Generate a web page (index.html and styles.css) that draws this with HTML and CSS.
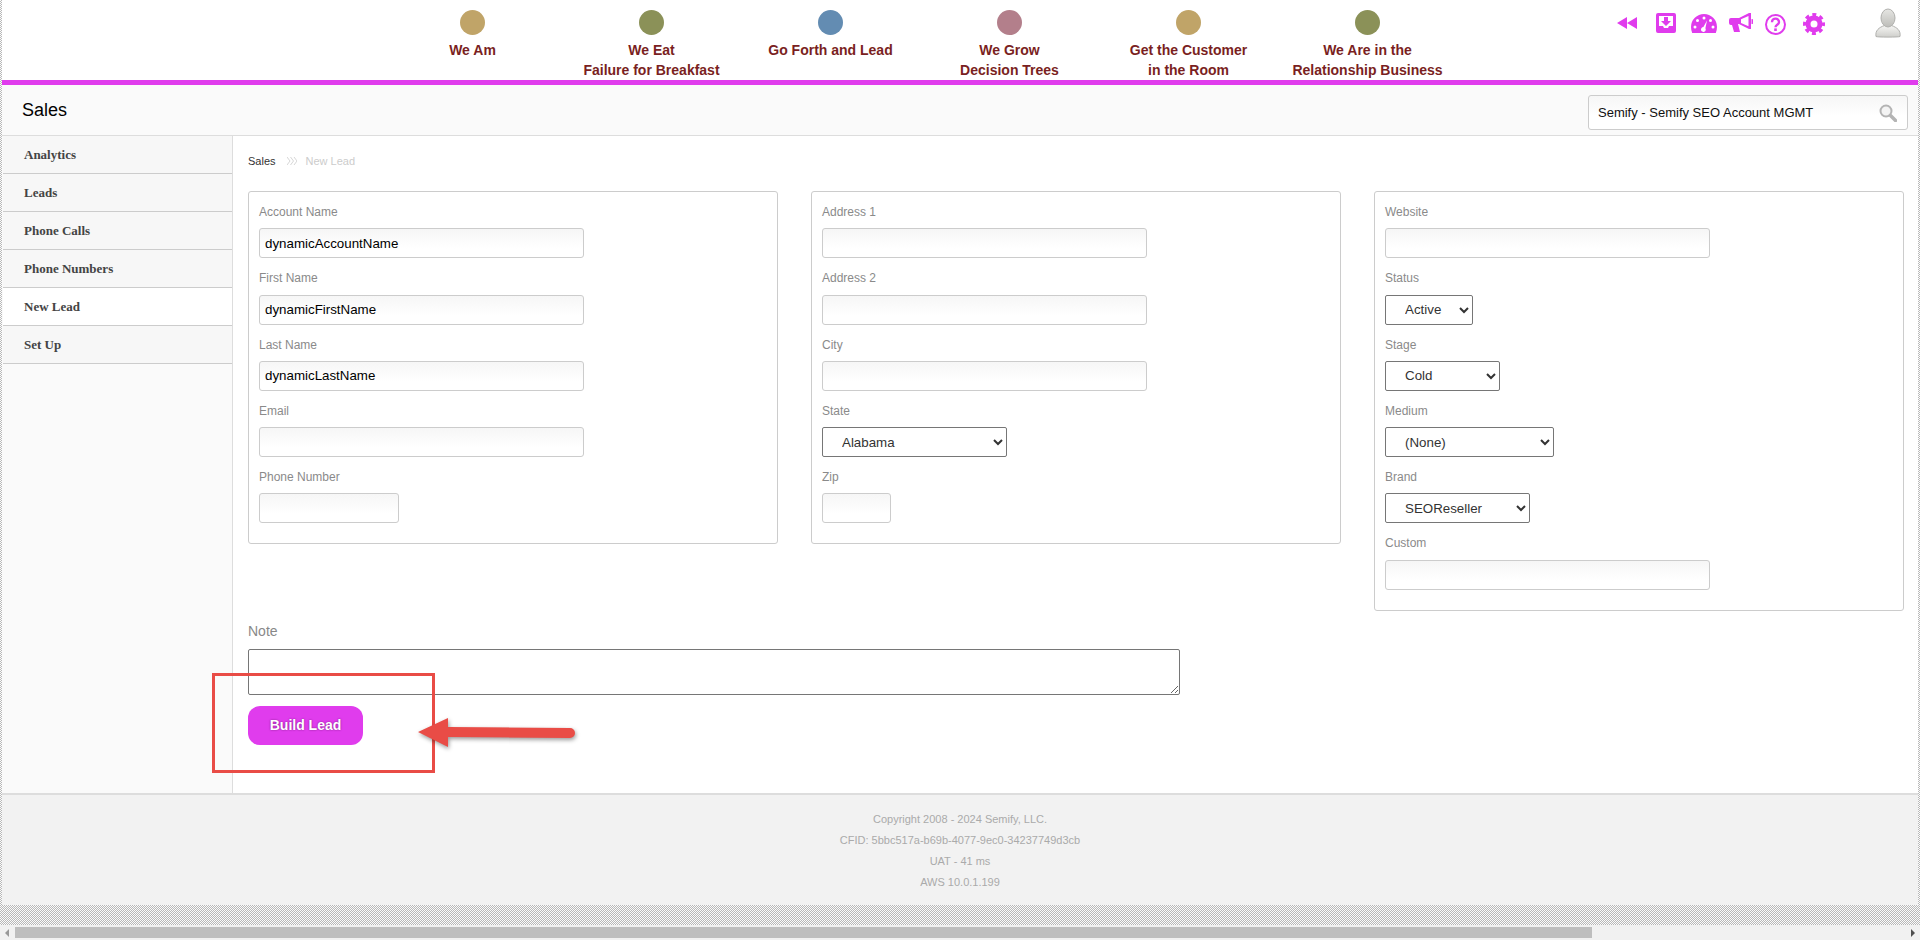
FILE: index.html
```html
<!DOCTYPE html>
<html lang="en">
<head>
  <meta charset="UTF-8">
  <title>Sales - New Lead</title>
  <link rel="stylesheet" href="styles.css">
</head>
<body>
  <div class="page">
    <header class="top">
      <nav class="top-nav">
        <a class="nav-item"><span class="dot dot-tan"></span>We Am</a>
        <a class="nav-item"><span class="dot dot-olive"></span>We Eat<br>Failure for Breakfast</a>
        <a class="nav-item"><span class="dot dot-blue"></span>Go Forth and Lead</a>
        <a class="nav-item"><span class="dot dot-rose"></span>We Grow<br>Decision Trees</a>
        <a class="nav-item"><span class="dot dot-tan"></span>Get the Customer<br>in the Room</a>
        <a class="nav-item"><span class="dot dot-olive"></span>We Are in the<br>Relationship Business</a>
      </nav>
      <div class="top-icons">
        <svg class="icon-back" viewBox="0 0 20 12"><path d="M10 0v12L0 6zM20 0v12L10 6z"/></svg>
        <svg class="icon-inbox" viewBox="0 0 20 20"><path fill-rule="evenodd" d="M2 0h16a2 2 0 0 1 2 2v16a2 2 0 0 1-2 2H2a2 2 0 0 1-2-2V2a2 2 0 0 1 2-2zM3 3v10h4l1 2h4l1-2h4V3z"/><path d="M8 4h4v4h3l-5 5-5-5h3z"/></svg>
        <svg class="icon-gauge" viewBox="0 0 26 19"><path fill-rule="evenodd" d="M13 0a13 13 0 0 1 13 13c0 2-.4 4-1.200 6H1.200C.4 17 0 15 0 13A13 13 0 0 1 13 0zM13 2.500a1.500 1.500 0 1 0 0 3 1.500 1.500 0 0 0 0-3zM6.500 5a1.500 1.500 0 1 0 0 3 1.500 1.500 0 0 0 0-3zM19.500 5a1.500 1.500 0 1 0 0 3 1.500 1.500 0 0 0 0-3zM4 11.500a1.500 1.500 0 1 0 0 3 1.500 1.500 0 0 0 0-3zM22 11.500a1.500 1.500 0 1 0 0 3 1.500 1.500 0 0 0 0-3zM16 6.500l-3.600 6.600a2.400 2.400 0 1 0 2 1.100z"/></svg>
        <svg class="icon-horn" viewBox="0 0 24 20"><path fill-rule="evenodd" d="M2 5h8L20 0h2v16h-2L10 11H9l2 8H5L3 12H2a2 2 0 0 1-2-2V7a2 2 0 0 1 2-2zM12 6.300v3.600l7.500 3.300V3z"/><path d="M22.500 6a2.500 2.500 0 0 1 0 5z"/></svg>
        <svg class="icon-help" viewBox="0 0 21 21"><circle cx="10.500" cy="10.500" r="9.500" class="ring"/><path class="hook" d="M7 8.200c0-5 7.200-4.600 7 0 0 2.600-3.500 2.600-3.500 5"/><rect x="9.200" y="14.400" width="2.600" height="2.600"/></svg>
        <svg class="icon-cog" viewBox="0 0 22 22"><circle cx="11" cy="11" r="6" class="cog-ring"/><circle cx="11" cy="11" r="9" class="cog-teeth"/></svg>
      </div>
      <svg class="avatar" viewBox="0 0 26 30">
        <defs>
          <linearGradient id="avHead" x1="0" y1="0" x2="0" y2="1"><stop offset="0" stop-color="#e6e6e3"/><stop offset="1" stop-color="#bdbdb9"/></linearGradient>
          <linearGradient id="avBody" x1="0" y1="0" x2="0" y2="1"><stop offset="0" stop-color="#f6f6f4"/><stop offset="1" stop-color="#cfcfcb"/></linearGradient>
        </defs>
        <path d="M1 28.500c-1-6 3-9 8.500-11h7c5.500 2 9.500 5 8.500 11-1 .8-23 .8-24 0z" fill="url(#avBody)" stroke="#b0b0ad"/>
        <ellipse cx="13" cy="10" rx="7" ry="9" fill="url(#avHead)" stroke="#b0b0ad"/>
      </svg>
    </header>

    <div class="title-bar">
      <h1 class="title">Sales</h1>
      <div class="account-search">
        <span>Semify - Semify SEO Account MGMT</span>
        <svg viewBox="0 0 18 18"><circle cx="7" cy="7" r="5.500" class="lens"/><path class="handle" d="M11.500 11.500l5 5"/></svg>
      </div>
    </div>

    <div class="body-row">
      <ul class="side-nav">
        <li>Analytics</li>
        <li>Leads</li>
        <li>Phone Calls</li>
        <li>Phone Numbers</li>
        <li class="active">New Lead</li>
        <li>Set Up</li>
      </ul>

      <main class="content">
        <div class="crumbs">
          <span>Sales</span>
          <svg class="crumb-sep" viewBox="0 0 10 8"><path d="M0 0l3 4-3 4M3.500 0l3 4-3 4M7 0l3 4-3 4"/></svg>
          <span class="crumb-now">New Lead</span>
        </div>

        <div class="panels">
          <div class="panel">
            <label class="field-label">Account Name</label>
            <input class="text-input wide" type="text" value="dynamicAccountName">
            <label class="field-label">First Name</label>
            <input class="text-input wide" type="text" value="dynamicFirstName">
            <label class="field-label">Last Name</label>
            <input class="text-input wide" type="text" value="dynamicLastName">
            <label class="field-label">Email</label>
            <input class="text-input wide" type="text">
            <label class="field-label">Phone Number</label>
            <input class="text-input phone" type="text">
          </div>
          <div class="panel">
            <label class="field-label">Address 1</label>
            <input class="text-input wide" type="text">
            <label class="field-label">Address 2</label>
            <input class="text-input wide" type="text">
            <label class="field-label">City</label>
            <input class="text-input wide" type="text">
            <label class="field-label">State</label>
            <select class="pick pick-state"><option>Alabama</option></select>
            <label class="field-label">Zip</label>
            <input class="text-input zip" type="text">
          </div>
          <div class="panel">
            <label class="field-label">Website</label>
            <input class="text-input wide" type="text">
            <label class="field-label">Status</label>
            <select class="pick pick-status"><option>Active</option></select>
            <label class="field-label">Stage</label>
            <select class="pick pick-stage"><option>Cold</option></select>
            <label class="field-label">Medium</label>
            <select class="pick pick-medium"><option>(None)</option></select>
            <label class="field-label">Brand</label>
            <select class="pick pick-brand"><option>SEOReseller</option></select>
            <label class="field-label">Custom</label>
            <input class="text-input wide" type="text">
          </div>
        </div>

        <label class="note-label">Note</label>
        <textarea class="note"></textarea>
        <button class="build-btn" type="button">Build Lead</button>
      </main>
    </div>

    <footer class="foot">
      <p>Copyright 2008 - 2024 Semify, LLC.</p>
      <p>CFID: 5bbc517a-b69b-4077-9ec0-34237749d3cb</p>
      <p>UAT - 41 ms</p>
      <p>AWS 10.0.1.199</p>
    </footer>

    <!-- annotation drawn on top of the screenshot -->
    <div class="mark-box"></div>
    <svg class="mark-arrow" viewBox="0 0 160 32"><path d="M0 15L30 1v9l122 1a4.500 4.500 0 0 1 0 10l-122-1v10z"/></svg>
  </div>

  <div class="h-scroll">
    <span class="arrow-left"></span>
    <div class="h-thumb"></div>
    <span class="arrow-right"></span>
  </div>
</body>
</html>
```

FILE: styles.css
```css
html, body {
  margin: 0;
  padding: 0;
}

body {
  width: 1920px;
  height: 940px;
  overflow: hidden;
  font-family: "Liberation Sans", Arial, sans-serif;
  background: repeating-conic-gradient(#b8b8b8 0 25%, #fbfbfb 0 50%) 0 0 / 2px 2px;
}

.page {
  position: relative;
  margin: 0 2px;
  height: 905px;
  background-color: #fff;
}

/* top header */
.top {
  display: flex;
  height: 80px;
  box-sizing: content-box;
  border-bottom: 5px solid #e03ced;
  background-color: #fff;
}

.top-nav {
  display: flex;
  margin-left: 381px;
}

.nav-item {
  display: block;
  width: 179px;
  padding-top: 10px;
  text-align: center;
  font-size: 14px;
  font-weight: bold;
  line-height: 20px;
  color: #7a1f22;
}

.dot {
  display: block;
  width: 25px;
  height: 25px;
  margin: 0 auto 5px;
  border-radius: 50%;
}

.dot-tan { background-color: #c0a468; }
.dot-olive { background-color: #8b9158; }
.dot-blue { background-color: #638cb2; }
.dot-rose { background-color: #b37f8b; }

.top-icons {
  display: flex;
  align-items: flex-start;
  margin-left: 0;
  padding-left: 160px;
  fill: #e03ced;
}

.icon-back { width: 20px; height: 12px; margin-top: 17px; }
.icon-inbox { width: 20px; height: 20px; margin: 13px 0 0 19px; }
.icon-gauge { width: 26px; height: 19px; margin: 14px 0 0 15px; }
.icon-horn { width: 24px; height: 20px; margin: 13px 0 0 12px; }
.icon-help { width: 21px; height: 21px; margin: 14px 0 0 12px; }
.icon-cog { width: 22px; height: 22px; margin: 13px 0 0 17px; }

.ring {
  fill: none;
  stroke: #e03ced;
  stroke-width: 2;
}

.hook {
  fill: none;
  stroke: #e03ced;
  stroke-width: 2.400;
}

.cog-ring {
  fill: none;
  stroke: #e03ced;
  stroke-width: 5;
}

.cog-teeth {
  fill: none;
  stroke: #e03ced;
  stroke-width: 4;
  stroke-dasharray: 3.800 3.270;
  stroke-dashoffset: 1.900;
}

.avatar {
  width: 26px;
  height: 30px;
  margin: 8px 0 0 50px;
}

/* title row */
.title-bar {
  display: flex;
  justify-content: space-between;
  height: 50px;
  padding: 0 10px 0 20px;
  background-color: #fafafa;
  border-bottom: 1px solid #ddd;
}

.title {
  margin: 0;
  font-size: 18px;
  font-weight: normal;
  line-height: 51px;
  color: #000;
}

.account-search {
  display: flex;
  justify-content: space-between;
  align-items: center;
  box-sizing: border-box;
  width: 320px;
  height: 35px;
  margin-top: 10px;
  padding: 0 10px 0 9px;
  border: 1px solid #ccc;
  border-radius: 3px;
  background: linear-gradient(#f6f6f6, #fff 60%);
  font-size: 13px;
  color: #111;
}

.account-search svg {
  width: 18px;
  height: 18px;
}

.lens {
  fill: #f4f4f4;
  stroke: #b4b4b4;
  stroke-width: 2;
}

.handle {
  stroke: #b4b4b4;
  stroke-width: 3.500;
  stroke-linecap: round;
}

/* sidebar + content */
.body-row {
  display: flex;
  height: 657px;
}

.side-nav {
  box-sizing: border-box;
  width: 231px;
  margin: 0;
  padding: 0 0 0 1px;
  list-style: none;
  background-color: #fafafa;
  border-right: 1px solid #ddd;
}

.side-nav li {
  box-sizing: border-box;
  height: 38px;
  padding-left: 21px;
  background-color: #f7f7f7;
  border-bottom: 1px solid #ccc;
  font-family: "Liberation Serif", "Times New Roman", serif;
  font-size: 13px;
  font-weight: bold;
  line-height: 37px;
  color: #444;
}

.side-nav li.active {
  background-color: #fff;
}

.content {
  flex: 1;
  padding: 18px 0 0 15px;
  background-color: #fff;
}

.crumbs {
  display: flex;
  align-items: center;
  height: 14px;
  margin-bottom: 23px;
  font-size: 11px;
  line-height: 14px;
  color: #333;
}

.crumb-sep {
  width: 10px;
  height: 8px;
  margin: 0 9px 0 11px;
  fill: none;
  stroke: #ccc;
  stroke-width: 0.800;
}

.crumb-now {
  color: #ccc;
}

.panels {
  display: flex;
  align-items: flex-start;
  gap: 33px;
}

.panel {
  display: flex;
  flex-direction: column;
  align-items: flex-start;
  box-sizing: border-box;
  width: 530px;
  padding: 0 10px 20px;
  border: 1px solid #ccc;
  border-radius: 3px;
  background-color: #fff;
}

.field-label {
  box-sizing: border-box;
  height: 36.250px;
  padding-top: 13px;
  font-size: 12px;
  line-height: 14px;
  color: #8a8a8a;
}

.text-input {
  box-sizing: border-box;
  height: 30px;
  padding: 0 5px;
  border: 1px solid #ccc;
  border-radius: 3px;
  background: linear-gradient(#f6f6f6, #fff 70%);
  font-family: "Liberation Sans", Arial, sans-serif;
  font-size: 13.333px;
  color: #000;
}

.wide { width: 325px; }
.phone { width: 140px; }
.zip { width: 69px; }

.pick {
  box-sizing: border-box;
  height: 30px;
  padding-left: 15px;
  border: 1px solid #767676;
  border-radius: 2px;
  background-color: #fff;
  font-family: "Liberation Sans", Arial, sans-serif;
  font-size: 13.333px;
  color: #333;
}

.pick-state { width: 185px; }
.pick-status { width: 88px; }
.pick-stage { width: 115px; }
.pick-medium { width: 169px; }
.pick-brand { width: 145px; }

.note-label {
  display: block;
  height: 38px;
  padding-top: 12px;
  box-sizing: border-box;
  font-size: 14px;
  line-height: 16px;
  color: #888;
}

.note {
  display: block;
  box-sizing: border-box;
  width: 932px;
  height: 46px;
  margin: 0 0 11px;
  border: 1px solid #767676;
  border-radius: 2px;
}

.build-btn {
  display: block;
  width: 115px;
  height: 39px;
  padding: 0;
  border: none;
  border-radius: 12px;
  background-color: #e03ced;
  font-family: "Liberation Sans", Arial, sans-serif;
  font-size: 14px;
  font-weight: bold;
  color: #fff;
  text-shadow: 0 0 2px rgba(60, 0, 60, 0.6);
}

/* footer */
.foot {
  box-sizing: border-box;
  height: 112px;
  padding-top: 14px;
  background-color: #f2f2f2;
  border-top: 2px solid #ddd;
  text-align: center;
  font-size: 11px;
  line-height: 21px;
  color: #aaa;
}

.foot p {
  margin: 0;
}

/* annotation */
.mark-box {
  position: absolute;
  left: 210px;
  top: 673px;
  width: 223px;
  height: 100px;
  box-sizing: border-box;
  border: 3px solid #e94c46;
}

.mark-arrow {
  position: absolute;
  left: 416px;
  top: 717px;
  width: 160px;
  height: 32px;
  fill: #e94c46;
  filter: drop-shadow(1px 2px 2px rgba(0, 0, 0, 0.4));
}

/* fake browser scrollbar */
.h-scroll {
  display: flex;
  align-items: center;
  height: 15px;
  margin-top: 20px;
  background-color: #f1f1f1;
}

.h-thumb {
  width: 1577px;
  height: 11px;
  margin-left: 6px;
  background-color: #bebebe;
}

.arrow-left {
  width: 0;
  height: 0;
  margin-left: 5px;
  border: 4px solid transparent;
  border-left: 0;
  border-right: 4px solid #999;
}

.arrow-right {
  width: 0;
  height: 0;
  margin-left: 319px;
  border: 4px solid transparent;
  border-right: 0;
  border-left: 4px solid #505050;
}
```
